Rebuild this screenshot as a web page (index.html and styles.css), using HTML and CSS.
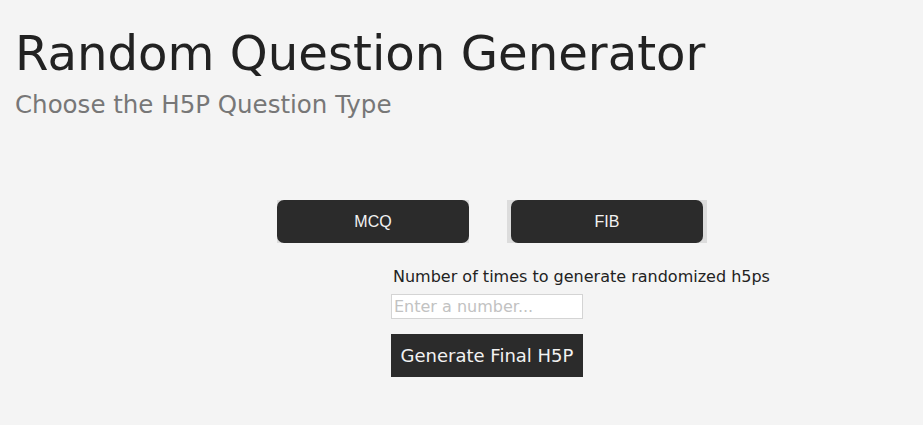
FILE: index.html
```html
<!DOCTYPE html>
<html>
<head>
<meta charset="utf-8">
<link rel="stylesheet" href="styles.css">
</head>
<body>
<header class="head">
  <h1 class="title">Random Question Generator</h1>
  <h2 class="subtitle">Choose the H5P Question Type</h2>
</header>
<div class="types">
  <div class="type-wrap"><button class="type-btn">MCQ</button></div>
  <div class="type-wrap wide"><button class="type-btn">FIB</button></div>
</div>
<div class="gen">
  <label class="gen-label" for="num">Number of times to generate randomized h5ps</label>
  <input id="num" class="gen-input" type="text" placeholder="Enter a number...">
  <button class="gen-btn">Generate Final H5P</button>
</div>
</body>
</html>
```
FILE: styles.css
```css
html, body {
  margin: 0;
  padding: 0;
  background: #f4f4f4;
  font-family: "DejaVu Sans", sans-serif;
  color: #222;
}
.head {
  padding: 25px 0 0 15px;
}
.title {
  margin: 0;
  font-size: 48.2px;
  font-weight: normal;
  line-height: 56px;
  color: #222;
}
.subtitle {
  margin: 8px 0 0;
  font-size: 24.5px;
  font-weight: normal;
  line-height: 32px;
  color: #777;
}
.types {
  display: flex;
  gap: 38px;
  margin: 79px 0 0 277px;
}
.type-wrap {
  background: #dcdcdc;
  display: flex;
  justify-content: center;
  width: 192px;
  height: 43px;
}
.type-wrap.wide {
  width: 200px;
}
.type-btn {
  width: 192px;
  height: 43px;
  border: none;
  border-radius: 7px;
  background: #2b2b2b;
  color: #f2f2f2;
  font-family: "Liberation Sans", Arial, sans-serif;
  font-size: 16px;
  padding: 0;
}
.gen {
  display: flex;
  flex-direction: column;
  align-items: flex-start;
  margin: 23px 0 0 391px;
}
.gen-label {
  font-size: 16px;
  line-height: 22px;
  margin-left: 2px;
  color: #222;
}
.gen-input {
  margin-top: 6px;
  width: 192px;
  height: 25px;
  box-sizing: border-box;
  border: 1px solid #d4d4d4;
  background: #fff;
  padding: 0 2px;
  font-family: "DejaVu Sans", sans-serif;
  font-size: 16px;
  outline: none;
}
.gen-input::placeholder {
  color: #c2c2c2;
}
.gen-btn {
  margin-top: 15px;
  width: 192px;
  height: 43px;
  border: none;
  border-radius: 0;
  background: #2b2b2b;
  color: #f2f2f2;
  font-family: "DejaVu Sans", sans-serif;
  font-size: 18px;
  padding: 0;
}
```
